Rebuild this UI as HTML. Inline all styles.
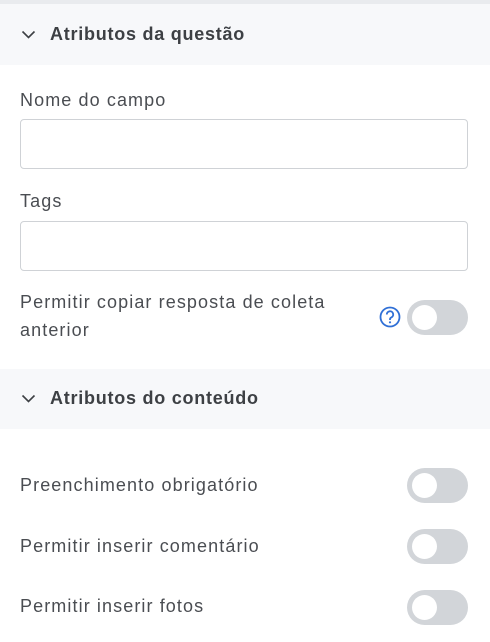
<!DOCTYPE html>
<html><head><meta charset="utf-8"><style>
body{margin:0;width:490px;height:642px;background:#fff;font-family:"Liberation Sans",sans-serif;position:relative;overflow:hidden;color:#4a4d52}
.a{position:absolute}
.band{left:0;width:490px;background:#f7f8fa}
.h{left:21px;font-size:18px;font-weight:bold;color:#3d4044;display:flex;align-items:center;gap:14px;line-height:20px;letter-spacing:0.75px}
.l{left:20px;font-size:18px;line-height:28px;letter-spacing:1.1px}
.in{left:20px;width:446px;height:48px;border:1px solid #cfd2d6;border-radius:4px}
.t{left:407px;width:61px;height:35px;border-radius:18px;background:#d2d5d9}
.t::after{content:"";position:absolute;left:5px;top:5px;width:25px;height:25px;border-radius:50%;background:#fff}
</style></head><body>
<div class="a" style="top:0;left:0;width:490px;height:4px;background:#e9ebee"></div>
<div class="a band" style="top:4px;height:61px"></div>
<div class="a h" style="top:24px"><svg width="15" height="10" viewBox="0 0 15 10"><path d="M1.5 2.5l6 6 6-6" fill="none" stroke="#3d4044" stroke-width="1.6"/></svg>Atributos da questão</div>
<div class="a l" style="top:86px">Nome do campo</div>
<div class="a in" style="top:119px"></div>
<div class="a l" style="top:187px">Tags</div>
<div class="a in" style="top:221px"></div>
<div class="a l" style="top:288px">Permitir copiar resposta de coleta<br>anterior</div>
<svg class="a" style="left:379px;top:306px" width="22" height="22" viewBox="0 0 22 22"><circle cx="11" cy="11" r="9.5" fill="none" stroke="#2f6fd6" stroke-width="1.8"/><path d="M7.8 8.5a3.2 3.2 0 1 1 4.5 2.9c-.9.4-1.3 1-1.3 1.9v.7" fill="none" stroke="#2f6fd6" stroke-width="1.8"/><circle cx="11" cy="16.3" r="1.1" fill="#2f6fd6"/></svg>
<div class="a t" style="top:300px"></div>
<div class="a band" style="top:369px;height:60px"></div>
<div class="a h" style="top:388px"><svg width="15" height="10" viewBox="0 0 15 10"><path d="M1.5 2.5l6 6 6-6" fill="none" stroke="#3d4044" stroke-width="1.6"/></svg>Atributos do conteúdo</div>
<div class="a l" style="top:471px">Preenchimento obrigatório</div>
<div class="a t" style="top:468px"></div>
<div class="a l" style="top:532px">Permitir inserir comentário</div>
<div class="a t" style="top:529px"></div>
<div class="a l" style="top:592px">Permitir inserir fotos</div>
<div class="a t" style="top:590px"></div>
</body></html>
